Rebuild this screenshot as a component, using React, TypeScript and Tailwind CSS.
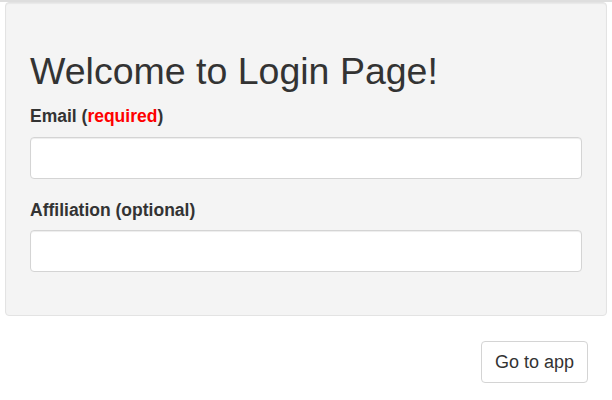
export default function App() {
  return (
    <div className="w-[612px] h-[400px] bg-white text-[#333] font-['Liberation_Sans',Arial,sans-serif]">
      <div className="h-[2px] bg-[#dedede]" />
      <div className="px-[5px]">
        <div className="bg-[#f4f4f4] border border-[#e3e3e3] rounded-[4px] shadow-[inset_0_1px_1px_rgba(0,0,0,0.05)] px-[24px] pt-[48px] pb-[43px]">
          <h1 className="text-[37.5px] leading-[41px] font-normal">Welcome to Login Page!</h1>

          <label className="block mt-[13px] mb-[9px] text-[17.5px] leading-[23px] font-bold">
            Email (<span className="text-[#ff0000]">required</span>)
          </label>
          <input type="text" className="block w-full h-[42px] bg-white border border-[#d4d4d4] rounded-[4px] shadow-[inset_0_1px_1px_rgba(0,0,0,0.075)] px-3" />

          <label className="block mt-[20px] mb-[8px] text-[17.5px] leading-[23px] font-bold">
            Affiliation (optional)
          </label>
          <input type="text" className="block w-full h-[42px] bg-white border border-[#d4d4d4] rounded-[4px] shadow-[inset_0_1px_1px_rgba(0,0,0,0.075)] px-3" />
        </div>
      </div>

      <div className="flex justify-end pr-[24px] pt-[25px]">
        <button className="w-[107px] h-[42px] bg-white border border-[#d4d4d4] rounded-[4px] text-[18px] text-[#333]">
          Go to app
        </button>
      </div>
    </div>
  );
}
